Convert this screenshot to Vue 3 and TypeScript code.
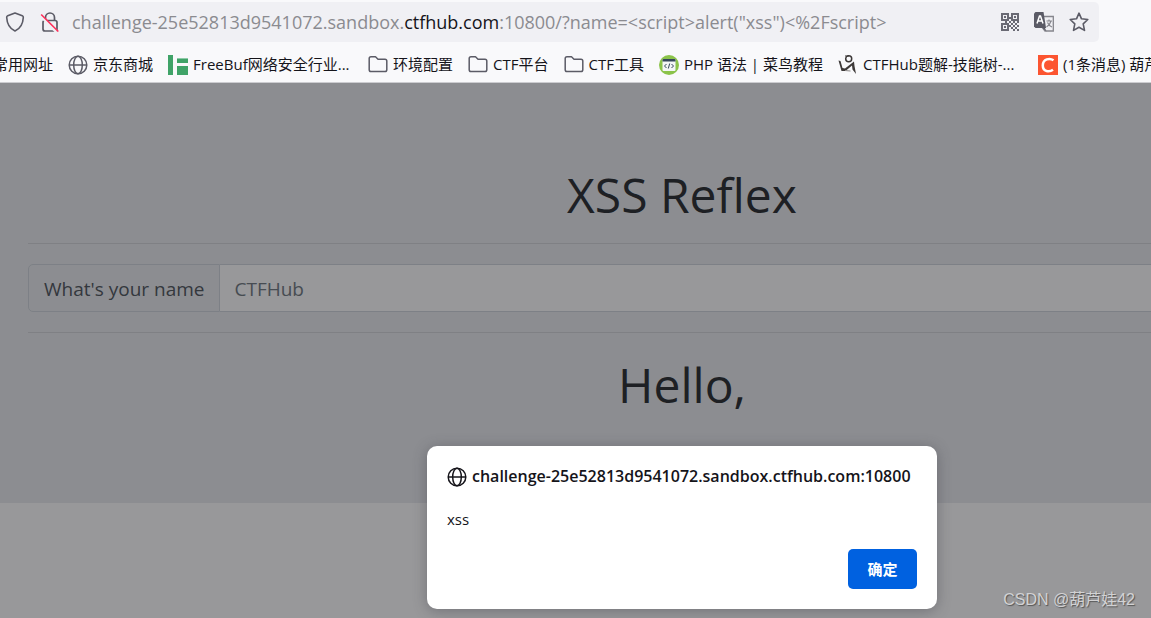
<script setup lang="ts">
import { ref } from 'vue'

interface Bookmark {
  icon: 'none' | 'globe' | 'freebuf' | 'folder' | 'runoob' | 'figure' | 'csdn'
  text: string
  clipped?: boolean
}

const bookmarks: Bookmark[] = [
  { icon: 'none', text: '常用网址' },
  { icon: 'globe', text: '京东商城' },
  { icon: 'freebuf', text: 'FreeBuf网络安全行业...', clipped: true },
  { icon: 'folder', text: '环境配置' },
  { icon: 'folder', text: 'CTF平台' },
  { icon: 'folder', text: 'CTF工具' },
  { icon: 'runoob', text: 'PHP 语法 | 菜鸟教程' },
  { icon: 'figure', text: 'CTFHub题解-技能树-...', clipped: true },
  { icon: 'csdn', text: '(1条消息) 葫芦娃' },
]

const name = ref('')
const urlHost = 'challenge-25e52813d9541072.sandbox.'
const urlDomain = 'ctfhub.com'
const urlRest = ':10800/?name=<script>alert("xss")<%2Fscript>'
const origin = 'challenge-25e52813d9541072.sandbox.ctfhub.com:10800'
</script>

<template>
  <div class="browser">
    <header class="chrome">
      <div class="urlbar">
        <button class="icon-btn" type="button" aria-label="Tracking protection">
          <svg width="20" height="20" viewBox="0 0 20 20" fill="none" stroke="#5b5b66" stroke-width="1.6" stroke-linejoin="round">
            <path d="M10 1 L17.3 3.8 Q18.4 4.2 18.3 5.5 C18 11.6 15.4 16.6 10 19 C4.600 16.600 2 11.600 1.700 5.500 Q1.600 4.200 2.700 3.800 Z" />
          </svg>
        </button>
        <button class="icon-btn" type="button" aria-label="Connection not secure">
          <svg width="20" height="20" viewBox="0 0 20 20" fill="none" stroke="#5b5b66" stroke-width="1.7">
            <path d="M5.500 8 V5.500 A4.500 4.500 0 0 1 14.500 5.500 V8" />
            <rect x="3" y="8.500" width="14" height="10.500" rx="2" />
            <path d="M0.500 3.500 L16.500 20" stroke="#f0f0f4" stroke-width="3" />
            <path d="M1.200 2.500 L18.300 19.500" stroke="#ff2e59" stroke-width="1.600" />
          </svg>
        </button>
        <div class="url">{{ urlHost }}<span class="domain">{{ urlDomain }}</span>{{ urlRest }}</div>
        <div class="actions">
          <button class="icon-btn" type="button" aria-label="QR code">
            <svg width="18" height="18" viewBox="0 0 18 18" fill="#6a6a74">
              <path fill-rule="evenodd" d="M0 0H8V8H0Z M2 2V6H6V2Z M10 0H18V8H10Z M12 2V6H16V2Z M0 10H8V18H0Z M2 12V16H6V12Z" />
              <path d="M3 3h2v2H3Z M13 3h2v2H13Z M3 13h2v2H3Z M8 4h2v2H8Z M4 8h2v2H4Z M12 8h2v2H12Z M8 8h2v2H8Z M10 10h2v2H10Z M14 10h2v2H14Z M12 12h2v2H12Z M16 12h2v2H16Z M10 14h2v2H10Z M14 14h2v2H14Z M12 16h2v2H12Z M16 16h2v2H16Z M8 12h2v2H8Z M16 8h2v2H16Z" />
            </svg>
          </button>
          <button class="icon-btn" type="button" aria-label="Translate">
            <svg width="20" height="20" viewBox="0 0 20 20">
              <path d="M10 4.500 H19.300 V19 H11 L8 15" fill="#f0f0f4" stroke="#85858c" stroke-width="1.300" />
              <path d="M0 1.500 L1.500 0 H9.500 L12 16 H1.500 L0 14.500 Z" fill="#5b5b66" />
              <path d="M11 16 L12.500 19.500 L8.500 16 Z" fill="#5b5b66" />
              <path d="M3 11.500 L5.500 4 H6.500 L9 11.500 M4 9 H8" fill="none" stroke="#fff" stroke-width="1.500" />
              <path d="M12.500 9 H18 M15 7.500 V9 M17 9 Q16 13 12.500 15 M13.500 10.500 Q15 14 18 15" fill="none" stroke="#85858c" stroke-width="1.100" />
            </svg>
          </button>
          <button class="icon-btn" type="button" aria-label="Bookmark this page">
            <svg width="20" height="20" viewBox="0 0 20 20" fill="none" stroke="#5b5b66" stroke-width="1.600" stroke-linejoin="round">
              <path d="M10 1.200 L12.500 6.800 L18.800 7.500 L14.200 11.800 L15.500 18.400 L10 15.200 L4.500 18.400 L5.800 11.800 L1.200 7.500 L7.500 6.800 Z" />
            </svg>
          </button>
        </div>
      </div>
      <nav class="bookmarks" aria-label="Bookmarks">
        <a v-for="(b, i) in bookmarks" :key="i" class="bookmark" href="#">
          <svg v-if="b.icon === 'globe'" width="20" height="20" viewBox="0 0 20 20" fill="none" stroke="#5b5b66" stroke-width="1.500">
            <circle cx="10" cy="10" r="8.800" /><ellipse cx="10" cy="10" rx="4.300" ry="8.800" /><path d="M1 10H19" />
          </svg>
          <svg v-else-if="b.icon === 'freebuf'" width="20" height="20" viewBox="0 0 20 20">
            <path d="M0 0H5V20H0Z M9 4H20V8H9Z M9 11H20V15H18V20H9Z" fill="#40a368" />
            <path d="M9 3H20V4H9Z" fill="#8fcba8" />
            <path d="M18 15H20V20H18Z" fill="#40a368" />
          </svg>
          <svg v-else-if="b.icon === 'folder'" width="20" height="20" viewBox="0 0 20 20" fill="none" stroke="#5b5b66" stroke-width="1.500" stroke-linejoin="round">
            <path d="M3 1.800 H7.500 L10 4.200 H17 Q18.800 4.200 18.800 6 V14.700 Q18.800 16.500 17 16.500 H3 Q1.200 16.500 1.200 14.700 V3.600 Q1.200 1.800 3 1.800 Z" />
          </svg>
          <svg v-else-if="b.icon === 'runoob'" width="20" height="20" viewBox="0 0 20 20">
            <circle cx="10" cy="10" r="10" fill="#8bc34a" />
            <rect x="3.500" y="4" width="13" height="12" rx="1" fill="#f4f6f7" />
            <path d="M3.500 6.500V5Q3.500 4 4.500 4H15.500Q16.500 4 16.500 5V6.500Z" fill="#35465a" />
            <path d="M7.500 9 L5.500 11 L7.500 13 M12.500 9 L14.500 11 L12.500 13 M10.700 8.500 L9.300 13.500" fill="none" stroke="#35465a" />
          </svg>
          <svg v-else-if="b.icon === 'figure'" width="20" height="20" viewBox="0 0 20 20" fill="none" stroke="#3d3938">
            <circle cx="10.700" cy="3.800" r="3" stroke-width="1.500" />
            <path d="M7 1 H11" stroke-width="1" />
            <path d="M0.500 5.500 L2.500 6 L4.500 13 L7 13.500 L16 6.500 L16.500 11 L18 19 L14.500 14.500 L14 10.500 L7.500 16 L3.500 16 Z" fill="#3d3938" stroke="none" />
            <path d="M7 15.500 L12.500 16" stroke="#8b8786" stroke-width="1" />
          </svg>
          <svg v-else-if="b.icon === 'csdn'" width="20" height="20" viewBox="0 0 20 20">
            <rect width="20" height="20" fill="#fc5531" />
            <path d="M15.500 5.300 C12 2.800 4.800 3.700 4.800 10.500 C4.800 17 11.500 17.300 15 14.800" fill="none" stroke="#fff" stroke-width="2.500" />
          </svg>
          <span class="label" :class="{ clipped: b.clipped }">{{ b.text }}</span>
        </a>
      </nav>
    </header>

    <main class="viewport">
      <section class="jumbotron">
        <h1>XSS Reflex</h1>
        <hr />
        <form class="input-group" @submit.prevent>
          <label for="name">What's your name</label>
          <input id="name" v-model="name" type="text" placeholder="CTFHub" />
        </form>
        <hr />
        <h1>Hello,</h1>
      </section>
      <div class="overlay">
        <div class="dialog" role="alertdialog" aria-labelledby="dlg-title" aria-describedby="dlg-text">
          <div id="dlg-title" class="dialog-title">
            <svg width="20" height="20" viewBox="0 0 20 20" fill="none" stroke="#15141a" stroke-width="1.500">
              <circle cx="10" cy="10" r="8.800" /><ellipse cx="10" cy="10" rx="4.300" ry="8.800" /><path d="M1 10H19" />
            </svg>
            <span>{{ origin }}</span>
          </div>
          <p id="dlg-text">xss</p>
          <button class="ok" type="button">确定</button>
        </div>
      </div>
    </main>
    <div class="watermark">CSDN @葫芦娃42</div>
  </div>
</template>

<style>
body {
  margin: 0;
}
</style>

<style scoped>
.browser {
  --ui: "Open Sans", "Noto Sans", "Noto Sans CJK SC", sans-serif;
  position: relative;
  display: flex;
  flex-direction: column;
  height: 100vh;
  overflow: hidden;
  background: #fff;
  font-family: var(--ui);
  color: #15141a;
}
.browser * {
  box-sizing: border-box;
}
.chrome {
  flex: none;
  padding-top: 2px;
  background: #f9f9fb;
  border-bottom: 1px solid #ccccd0;
}
.urlbar {
  display: flex;
  align-items: center;
  gap: 15px;
  height: 40px;
  margin-right: 52px;
  padding: 0 10px 0 5px;
  background: #f0f0f4;
  border-radius: 0 5px 5px 0;
}
.icon-btn {
  display: flex;
  flex: none;
  padding: 0;
  border: 0;
  background: none;
}
.url {
  flex: 1;
  margin-left: -3px;
  overflow: hidden;
  white-space: nowrap;
  font-size: 18px;
  line-height: 28px;
  color: #8b8b90;
}
.domain {
  color: #15141a;
}
.actions {
  display: flex;
  align-items: center;
  gap: 15px;
}
.bookmarks {
  display: flex;
  align-items: center;
  gap: 15px;
  height: 40px;
  margin-left: -7px;
  padding-top: 6px;
  white-space: nowrap;
}
.bookmark {
  display: flex;
  flex: none;
  align-items: center;
  gap: 5px;
  color: #15141a;
  text-decoration: none;
}
.label {
  padding-bottom: 2px;
  font-size: 15px;
  line-height: 22px;
}
.clipped {
  min-width: 160px;
}
.viewport {
  position: relative;
  flex: 1;
  margin-right: -213px;
  background: #fff;
}
.jumbotron {
  padding: 80px 28px 90px;
  background: #e9ecef;
  color: #212529;
}
h1 {
  height: 60px;
  margin: 0;
  font-size: 48px;
  font-weight: 400;
  line-height: 64px;
  text-align: center;
}
hr {
  height: 1px;
  margin: 20px 0;
  border: 0;
  background: #d1d4d8;
}
.input-group {
  display: flex;
  height: 48px;
}
.input-group label {
  display: flex;
  align-items: center;
  padding: 2px 15px 0;
  border: 1px solid #ced4da;
  border-radius: 5px 0 0 5px;
  font-size: 19px;
  color: #495057;
}
.input-group input {
  flex: 1;
  min-width: 0;
  padding: 2px 14px 0;
  border: 1px solid #ced4da;
  border-left: 0;
  border-radius: 0 5px 5px 0;
  background: #fff;
  font-family: var(--ui);
  font-size: 19px;
  color: #495057;
}
.input-group input::placeholder {
  color: #6c757d;
  opacity: 1;
}
.overlay {
  position: absolute;
  inset: 0;
  display: flex;
  align-items: flex-end;
  justify-content: center;
  padding-bottom: 9px;
  background: rgba(26, 26, 30, 0.45);
}
.dialog {
  display: flex;
  flex-direction: column;
  width: 510px;
  padding: 20px;
  border-radius: 10px;
  background: #fff;
  box-shadow: 0 2px 14px rgba(58, 57, 68, 0.4);
}
.dialog-title {
  display: flex;
  align-items: center;
  gap: 5px;
  height: 22px;
  font-size: 16px;
  font-weight: 600;
  white-space: nowrap;
}
.dialog-title span {
  padding-bottom: 2px;
}
.dialog p {
  margin: 19px 0 18px;
  font-size: 15px;
  line-height: 24px;
}
.ok {
  align-self: flex-end;
  width: 69px;
  height: 40px;
  padding: 0 0 2px;
  border: 0;
  border-radius: 5px;
  background: #0061e0;
  color: #fff;
  font-family: var(--ui);
  font-size: 15px;
  font-weight: 700;
}
.watermark {
  position: absolute;
  right: 16px;
  bottom: 6px;
  font-family: "Liberation Sans", "Noto Sans CJK SC", sans-serif;
  font-size: 16px;
  line-height: 24px;
  color: #d2d2d4;
  text-shadow: 1px 1px 1px #555;
}
</style>
